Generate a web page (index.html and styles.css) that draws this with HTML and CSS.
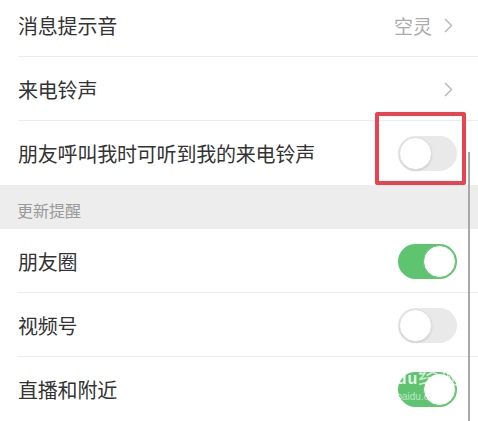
FILE: index.html
```html
<!DOCTYPE html>
<html lang="zh-CN">
<head>
    <meta charset="UTF-8" />
    <meta name="viewport" content="width=device-width, initial-scale=1.0" />
    <title>新消息通知</title>
    <link rel="stylesheet" href="styles.css">
</head>
<body>
    <div class="page">
        <div class="list">
            <div class="row line">
                <span class="label">消息提示音</span>
                <span class="value">空灵</span>
                <svg class="arrow" width="9" height="15" viewBox="0 0 9 15"><path d="M1 1 L7.5 7.5 L1 14" fill="none" stroke="#b5b5b5" stroke-width="1.4"/></svg>
            </div>
            <div class="row line">
                <span class="label">来电铃声</span>
                <svg class="arrow" width="9" height="15" viewBox="0 0 9 15"><path d="M1 1 L7.5 7.5 L1 14" fill="none" stroke="#b5b5b5" stroke-width="1.4"/></svg>
            </div>
            <div class="row">
                <span class="label">朋友呼叫我时可听到我的来电铃声</span>
                <span class="switch"></span>
                <!-- 标注用的红框 -->
                <span class="mark"></span>
            </div>
        </div>

        <div class="section-title">更新提醒</div>

        <div class="list">
            <div class="row line">
                <span class="label">朋友圈</span>
                <span class="switch on"></span>
            </div>
            <div class="row line">
                <span class="label">视频号</span>
                <span class="switch"></span>
            </div>
            <div class="row">
                <span class="label">直播和附近</span>
                <span class="switch on"></span>
                <span class="watermark">Bai<b>du</b>经验<small>jingyan.baidu.com</small></span>
            </div>
        </div>

        <div class="scrollbar"></div>
    </div>
</body>
</html>
```

FILE: styles.css
```css
body {
    margin: 0;
    background-color: #fff;
    font-family: "Noto Sans CJK SC", "Noto Sans", sans-serif;
    overflow: hidden;
}

.page {
    position: relative;
    height: 428px;
    overflow: hidden;
    margin-top: -7px;
}

.list {
    background-color: #fff;
}

.row {
    position: relative;
    display: flex;
    align-items: center;
    height: 64px;
    padding: 0 21px 0 18px;
}

.row.line::after {
    content: "";
    position: absolute;
    left: 18px;
    right: 0;
    bottom: 0;
    border-bottom: 1px solid #ededed;
}

.label {
    flex: 1;
    font-size: 20px;
    color: #333;
    letter-spacing: -0.2px;
}

.value {
    font-size: 19px;
    color: #ababab;
    margin-right: 12px;
}

.arrow {
    margin-right: 4px;
}

.section-title {
    height: 44px;
    background-color: #ededed;
    color: #9a9a9a;
    font-size: 16px;
    padding: 13px 0 0 17px;
    box-sizing: border-box;
}

/* スイッチ */
.switch {
    position: relative;
    width: 59px;
    height: 35px;
    border-radius: 18px;
    background-color: #e9e9e9;
    box-sizing: border-box;
}

.switch::before {
    content: "";
    position: absolute;
    top: 1px;
    left: 1px;
    width: 31px;
    height: 31px;
    border-radius: 50%;
    background-color: #fff;
    border: 1px solid #dedede;
    box-shadow: 0 1px 2px rgba(0, 0, 0, 0.12);
}

.switch.on {
    background-color: #5ec46f;
}

.switch.on::before {
    left: auto;
    right: 1px;
    border-color: #5ec46f;
    box-shadow: none;
}

.mark {
    position: absolute;
    left: 375px;
    top: -9px;
    width: 91px;
    height: 73px;
    border: 4px solid #e8434f;
    box-sizing: border-box;
    border-radius: 2px;
}

.scrollbar {
    position: absolute;
    left: 468px;
    top: 159px;
    bottom: 0;
    width: 2px;
    background-color: #a8a8a8;
}

.watermark {
    position: absolute;
    left: 362px;
    top: 8px;
    font-family: "Liberation Sans", sans-serif;
    font-size: 22px;
    color: rgba(255, 255, 255, 0.7);
    letter-spacing: 1px;
    line-height: 24px;
}

.watermark b {
    font-size: 16px;
    color: rgba(255, 255, 255, 0.85);
}

.watermark small {
    display: block;
    font-size: 10px;
    line-height: 12px;
    letter-spacing: 0;
    color: rgba(255, 255, 255, 0.6);
}
```
